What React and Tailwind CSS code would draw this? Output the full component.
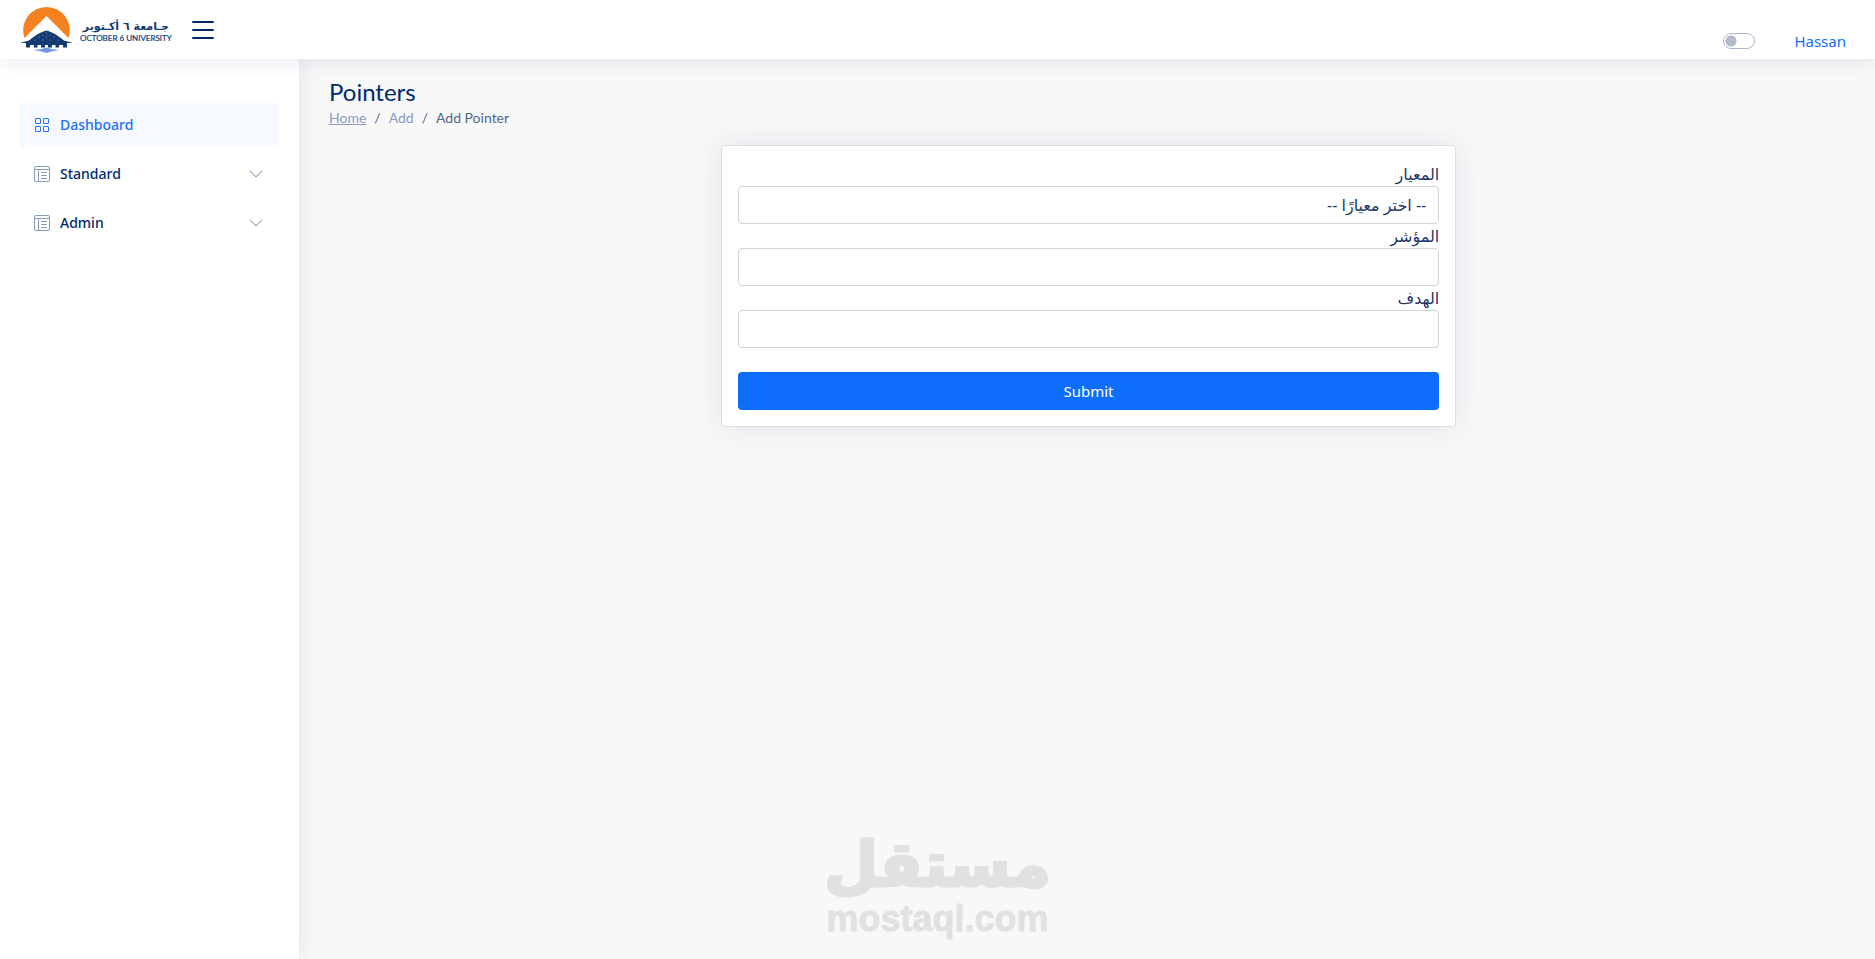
import { useState } from 'react';
import { BsChevronDown, BsGrid, BsLayoutTextWindowReverse, BsList } from 'react-icons/bs';

const menu = [
  { title: 'Standard', id: 'standard' },
  { title: 'Admin', id: 'admin' },
];

const Logo = () => (
  <a href="#" aria-label="October 6 University" className="block">
    <svg width="152" height="48" viewBox="0 0 152 48">
      <path d="M4.500 32A23.300 23.300 0 1 1 48.500 32L26.500 10 4.500 32Z" fill="#f58220" />
      <path d="M26.500 24.500C33 26 39 30.500 44 34.500L53 37H0L9 34.500C14 30.500 20 26 26.500 24.500Z" fill="#143a73" />
      <path d="M6 36.500H47V41.500H43V39H39V41.500H35.500V39H32V41.500H28V39H25V41.500H21V39H17.500V41.500H14V39H10V41.500H6Z" fill="#143a73" />
      <path d="M13.500 44Q21 43.500 26.500 41.500Q32 43.500 39.500 44Q32 45 26.500 47Q21 45 13.500 44Z" fill="#6f97e8" />
      <g fill="#8ea8d3">
        <circle cx="26.500" cy="27" r="0.600" />
        <circle cx="23" cy="29" r="0.600" />
        <circle cx="30" cy="29" r="0.600" />
        <circle cx="19" cy="31" r="0.600" />
        <circle cx="26.500" cy="31" r="0.600" />
        <circle cx="34" cy="31" r="0.600" />
        <circle cx="15" cy="34" r="0.600" />
        <circle cx="23" cy="34" r="0.600" />
        <circle cx="30" cy="34" r="0.600" />
        <circle cx="38" cy="34" r="0.600" />
      </g>
      <text x="149" y="24" direction="rtl" fontSize="11" fontWeight="700" fill="#143a73" fontFamily="DejaVu Sans, sans-serif">جـامعة ٦ أكـتوبر</text>
      <text x="60" y="35" fontSize="8" fontWeight="400" fill="#143a73" stroke="#143a73" strokeWidth="0.2" fontFamily="Lato, sans-serif">OCTOBER 6 UNIVERSITY</text>
    </svg>
  </a>
);

const Header = ({ onToggle }) => (
  <header className="relative z-20 flex h-[59px] items-center bg-white pr-[29px] pl-5 shadow-[0_2px_20px_rgba(1,41,112,0.1)]">
    <Logo />
    <button type="button" onClick={onToggle} aria-label="Toggle sidebar" className="ml-[15px] text-[#012970]">
      <BsList size={32} />
    </button>
    <div className="ml-auto flex items-center gap-[39px] self-end pb-1.5">
      <input
        type="checkbox"
        role="switch"
        aria-label="Dark mode"
        className="h-4 w-8 appearance-none rounded-full border border-[#a9b7ce] bg-[radial-gradient(circle_at_7px_7px,#b4bcca_5px,transparent_6px)]"
      />
      <a href="#" className="text-[15px] leading-6 text-[#0d6efd]">Hassan</a>
    </div>
  </header>
);

const Sidebar = () => (
  <aside className="relative z-10 w-[299px] shrink-0 bg-white pt-11 pr-5 pl-[19px] shadow-[0_0_20px_rgba(1,41,112,0.1)]">
    <nav className="flex flex-col gap-[5px] text-sm font-medium">
      <a href="#" className="flex h-11 items-center gap-2.5 rounded bg-[#f6f9ff] px-[15px] text-[#2070fd]">
        <BsGrid size={16} />
        Dashboard
      </a>
      {menu.map((item) => (
        <button type="button" key={item.id} className="flex h-11 items-center gap-2.5 rounded px-[15px] text-[#012970]">
          <BsLayoutTextWindowReverse size={16} className="text-[#899bbd]" />
          {item.title}
          <BsChevronDown size={16} className="ml-auto text-[#899bbd]" />
        </button>
      ))}
    </nav>
  </aside>
);

const PageTitle = () => (
  <div className="font-['Lato','Open_Sans',sans-serif]">
    <h1 className="mb-0.5 text-2xl leading-[26px] text-[#012970]">Pointers</h1>
    <nav aria-label="Breadcrumb" className="flex gap-2 text-sm leading-[21px] text-[#51678f]">
      <a href="#" className="text-[#899bbd] underline">Home</a>
      <span>/</span>
      <span className="text-[#899bbd]">Add</span>
      <span>/</span>
      <span>Add Pointer</span>
    </nav>
  </div>
);

const fieldClass = 'block h-[38px] w-full appearance-none rounded border border-[#ced4da] bg-white px-3 text-[#253765]';

const PointerForm = () => (
  <form
    onSubmit={(e) => e.preventDefault()}
    className="rounded-[3px] border border-[#dcdfe3] bg-white p-4 text-base leading-6 text-[#253765] shadow-[0_0_30px_rgba(1,41,112,0.1)]"
  >
    <div dir="rtl">
      <label htmlFor="standard" className="block">المعيار</label>
      <select id="standard" className={fieldClass}>
        <option>-- اختر معيارًا --</option>
      </select>
      <label htmlFor="pointer" className="block">المؤشر</label>
      <input id="pointer" type="text" className={fieldClass} />
      <label htmlFor="goal" className="block">الهدف</label>
      <input id="goal" type="text" className={fieldClass} />
    </div>
    <button type="submit" className="mt-6 h-[38px] w-full rounded bg-[#0d6efd] text-[15px] text-white">Submit</button>
  </form>
);

const Watermark = () => (
  <div className="pointer-events-none fixed inset-x-0 bottom-5 z-30 flex flex-col items-center font-bold text-[#e1e1e1]">
    <span dir="rtl" className="font-['DejaVu_Sans',sans-serif] text-[62px] leading-[68px] [-webkit-text-stroke:3px_#e1e1e1]">مستقل</span>
    <span className="font-['Liberation_Sans',sans-serif] text-4xl leading-10 [-webkit-text-stroke:1px_#e1e1e1]">mostaql.com</span>
  </div>
);

export default function App() {
  const [open, setOpen] = useState(true);

  return (
    <div className="flex min-h-screen flex-col bg-[#f8f8f8] font-['Noto_Sans','Open_Sans','DejaVu_Sans',sans-serif]">
      <Header onToggle={() => setOpen((o) => !o)} />
      <div className="flex grow">
        {open && <Sidebar />}
        <main className="grow pt-5 pr-[27px] pl-[30px]">
          <PageTitle />
          <div className="mx-auto mt-[17px] w-1/2 px-3">
            <PointerForm />
          </div>
        </main>
      </div>
      <Watermark />
    </div>
  );
}
